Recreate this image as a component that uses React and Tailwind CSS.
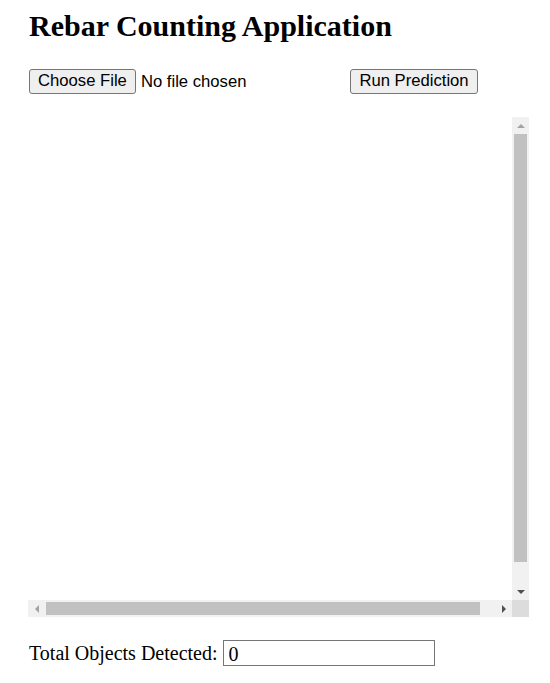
import { useState } from 'react';

function Arrow({ dir, color }) {
  const points = {
    up: '0,4 4,0 8,4',
    down: '0,0 8,0 4,4',
    left: '4,0 4,8 0,4',
    right: '0,0 0,8 4,4',
  }[dir];
  const vertical = dir === 'up' || dir === 'down';
  return (
    <svg width={vertical ? 8 : 4} height={vertical ? 4 : 8} viewBox={vertical ? '0 0 8 4' : '0 0 4 8'}>
      <polygon points={points} fill={color} />
    </svg>
  );
}

export default function App() {
  const [count] = useState('0');

  return (
    <div className="min-h-screen bg-white text-black font-['Liberation_Serif','Times_New_Roman',serif] px-[28px] pt-[8px]">
      <h1 className="text-[30px] leading-[36px] font-bold pl-[1px]">Rebar Counting Application</h1>

      <div className="mt-[25px] flex items-center h-[25px] font-['Liberation_Sans',Arial,sans-serif] text-[16.67px]">
        <div className="w-[321px] flex items-center ml-[1px]">
          <button className="h-[25px] px-[8px] bg-[#efefef] border border-[#767676] rounded-[3px] leading-none">
            Choose File
          </button>
          <span className="ml-[5px]">No file chosen</span>
        </div>
        <button className="h-[25px] w-[128px] bg-[#efefef] border border-[#767676] rounded-[3px] leading-none">
          Run Prediction
        </button>
      </div>

      <div className="mt-[23px] w-[501px] h-[500px] flex flex-col">
        <div className="flex flex-1 min-h-0">
          <div className="flex-1 bg-white" />
          <div className="w-[17px] bg-[#f1f1f1] flex flex-col">
            <div className="h-[17px] flex items-center justify-center">
              <Arrow dir="up" color="#a3a3a3" />
            </div>
            <div className="mx-[2px] h-[428px] bg-[#c1c1c1]" />
            <div className="flex-1" />
            <div className="h-[17px] flex items-center justify-center">
              <Arrow dir="down" color="#505050" />
            </div>
          </div>
        </div>
        <div className="h-[17px] flex">
          <div className="flex-1 bg-[#f1f1f1] flex items-center">
            <div className="w-[17px] flex items-center justify-center">
              <Arrow dir="left" color="#a3a3a3" />
            </div>
            <div className="ml-[1px] w-[434px] h-[13px] bg-[#c1c1c1]" />
            <div className="flex-1" />
            <div className="w-[17px] flex items-center justify-center">
              <Arrow dir="right" color="#505050" />
            </div>
          </div>
          <div className="w-[17px] bg-[#dcdcdc]" />
        </div>
      </div>

      <div className="mt-[21px] flex items-center text-[20px] pl-[1px]">
        <label htmlFor="total">Total Objects Detected:</label>
        <input
          id="total"
          readOnly
          value={count}
          className="ml-[5px] w-[212px] h-[26px] border border-[#767676] px-[5px] pt-[2px] text-[20px] leading-none outline-none"
        />
      </div>
    </div>
  );
}
